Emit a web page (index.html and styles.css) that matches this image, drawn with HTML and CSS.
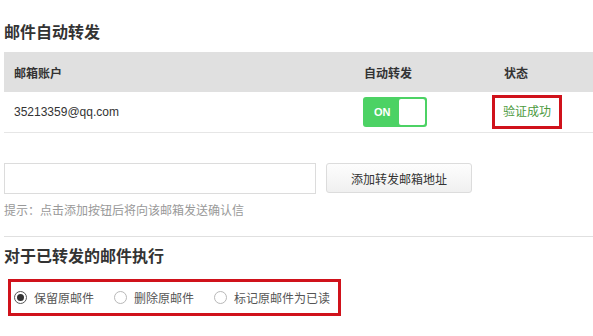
FILE: index.html
```html
<!DOCTYPE html>
<html lang="zh-CN">
<head>
    <meta charset="UTF-8">
    <meta name="viewport" content="width=device-width, initial-scale=1.0">
    <title>邮件自动转发</title>
    <link rel="stylesheet" href="styles.css">
</head>
<body>
    <div class="page">
        <h2 class="section-title first">邮件自动转发</h2>

        <table class="forward-table">
            <thead>
                <tr>
                    <th class="col-account">邮箱账户</th>
                    <th class="col-switch">自动转发</th>
                    <th class="col-status">状态</th>
                </tr>
            </thead>
            <tbody>
                <tr>
                    <td class="col-account">35213359@qq.com</td>
                    <td class="col-switch">
                        <span class="toggle"><span class="toggle-label">ON</span><span class="toggle-knob"></span></span>
                    </td>
                    <td class="col-status"><span class="status-ok">验证成功</span></td>
                </tr>
            </tbody>
        </table>

        <div class="add-row">
            <input type="text" class="add-input">
            <button class="add-button">添加转发邮箱地址</button>
        </div>
        <p class="hint">提示：点击添加按钮后将向该邮箱发送确认信</p>

        <hr class="divider">

        <h2 class="section-title">对于已转发的邮件执行</h2>

        <div class="radio-group">
            <label class="radio checked"><span class="radio-dot"></span>保留原邮件</label>
            <label class="radio"><span class="radio-dot"></span>删除原邮件</label>
            <label class="radio"><span class="radio-dot"></span>标记原邮件为已读</label>
        </div>
    </div>
</body>
</html>
```

FILE: styles.css
```css
body {
    margin: 0;
    padding: 0;
    background: #fff;
    color: #333;
    font-family: "Liberation Sans", "Noto Sans CJK SC", sans-serif;
    font-size: 12px;
}
.page {
    padding: 0 0 0 4px;
}
.section-title {
    font-size: 16px;
    line-height: 20px;
    font-weight: bold;
    color: #333;
    margin: 10px 0 12px;
}
.section-title.first {
    margin: 23px 0 9px;
}
.forward-table {
    width: 589px;
    border-collapse: collapse;
    table-layout: fixed;
}
.forward-table th {
    background-color: #e0e0e0;
    height: 40px;
    padding: 0 10px;
    text-align: left;
    font-weight: bold;
    color: #333;
}
.forward-table td {
    height: 40px;
    padding: 0 10px;
    border-bottom: 1px solid #e6e6e6;
    color: #333;
}
.col-account {
    width: 330px;
}
.col-switch {
    width: 120px;
}
.toggle {
    display: flex;
    align-items: center;
    justify-content: space-between;
    width: 64px;
    height: 30px;
    box-sizing: border-box;
    padding: 2px 2px 2px 11px;
    margin-left: -1px;
    background-color: #4cd264;
    border-radius: 3px;
    vertical-align: middle;
}
.toggle-label {
    color: #fff;
    font-weight: bold;
    font-size: 11px;
}
.toggle-knob {
    width: 26px;
    height: 26px;
    background: #fff;
    border-radius: 2px;
}
.status-ok {
    display: inline-block;
    margin-left: -12px;
    padding: 0 8px;
    line-height: 28px;
    border: 3px solid #d0121b;
    color: #4c9a3e;
}
.add-row {
    display: flex;
    gap: 10px;
    margin-top: 30px;
}
.add-input {
    width: 312px;
    height: 31px;
    box-sizing: border-box;
    border: 1px solid #dcdcdc;
    margin: 0;
    padding: 0 6px;
}
.add-button {
    width: 146px;
    height: 30px;
    border: 1px solid #dcdcdc;
    border-radius: 3px;
    background: linear-gradient(#fdfdfd, #f0f0f0);
    color: #333;
    font-family: inherit;
    font-size: 12px;
    cursor: pointer;
}
.hint {
    margin: 9px 0 0;
    line-height: 16px;
    color: #999;
}
.divider {
    border: none;
    border-top: 1px solid #e0e0e0;
    margin: 17px 0 0;
}
.radio-group {
    display: inline-flex;
    align-items: center;
    gap: 20px;
    margin-left: 4px;
    padding: 0 8px 0 3px;
    height: 31px;
    border: 3px solid #d0121b;
    color: #555;
}
.radio {
    display: flex;
    align-items: center;
    gap: 7px;
}
.radio-dot {
    width: 13px;
    height: 13px;
    box-sizing: border-box;
    border: 1px solid #b8b8b8;
    border-radius: 50%;
    display: flex;
    align-items: center;
    justify-content: center;
}
.radio.checked .radio-dot {
    border-color: #555;
}
.radio.checked .radio-dot::after {
    content: "";
    width: 7px;
    height: 7px;
    border-radius: 50%;
    background: #333;
}
```
